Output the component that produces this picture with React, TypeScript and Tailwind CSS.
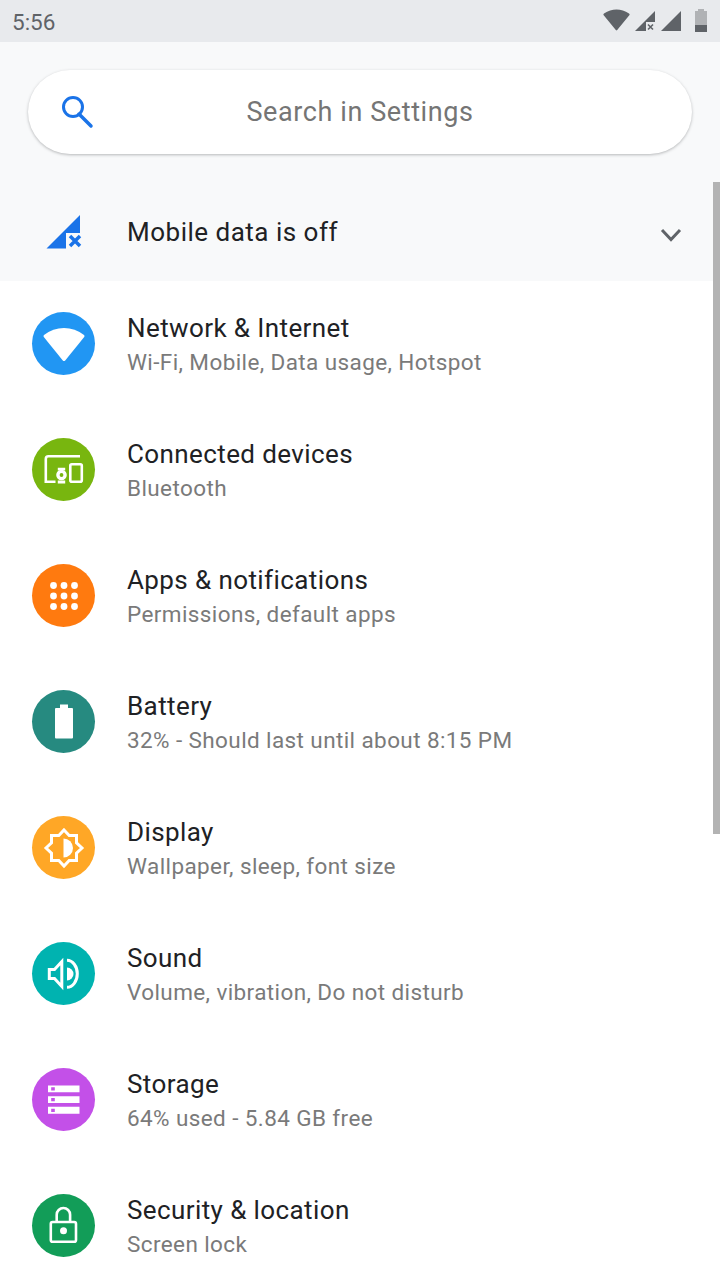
const items = [
  { title: "Network & Internet", sub: "Wi-Fi, Mobile, Data usage, Hotspot", bg: "bg-[#2196f3]", icon: <WifiIcon /> },
  { title: "Connected devices", sub: "Bluetooth", bg: "bg-[#78b60f]", icon: <DevicesIcon /> },
  { title: "Apps & notifications", sub: "Permissions, default apps", bg: "bg-[#ff7a0f]", icon: <AppsIcon /> },
  { title: "Battery", sub: "32% - Should last until about 8:15 PM", bg: "bg-[#268a80]", icon: <BatteryIcon /> },
  { title: "Display", sub: "Wallpaper, sleep, font size", bg: "bg-[#ffa726]", icon: <DisplayIcon /> },
  { title: "Sound", sub: "Volume, vibration, Do not disturb", bg: "bg-[#00b3b0]", icon: <SoundIcon /> },
  { title: "Storage", sub: "64% used - 5.84 GB free", bg: "bg-[#c350e8]", icon: <StorageIcon /> },
  { title: "Security & location", sub: "Screen lock", bg: "bg-[#129d58]", icon: <LockIcon /> },
];

function WifiIcon() {
  return (
    <svg width="42" height="42" viewBox="0 0 42 42" fill="#fff">
      <path d="M19.800 37.500 L0.800 14 Q0 13 1 12 Q10 5 21 5 Q32 5 41 12 Q42 13 41.200 14 L22.200 37.500 Q21 38.500 19.800 37.500 Z" />
    </svg>
  );
}

function DevicesIcon() {
  return (
    <svg width="42" height="42" viewBox="0 0 42 42" fill="none" stroke="#fff" strokeWidth="2.600">
      <path d="M37 7.300 H5.500 Q2.800 7.300 2.800 10 V32.700 H12.500" />
      <rect x="27.300" y="15.300" width="11.500" height="17.400" rx="1.500" />
      <circle cx="18.500" cy="26" r="3.600" strokeWidth="3.400" />
      <path d="M14.800 20.200 H22.200 M14.800 33 H22.200" strokeWidth="2.800" />
    </svg>
  );
}

function AppsIcon() {
  const centers = [10.5, 21, 31.5];
  return (
    <svg width="42" height="42" viewBox="0 0 42 42" fill="#fff">
      {centers.map((cy) =>
        centers.map((cx) => <circle key={`${cx}-${cy}`} cx={cx} cy={cy} r="3.400" />),
      )}
    </svg>
  );
}

function BatteryIcon() {
  return (
    <svg width="42" height="42" viewBox="0 0 42 42" fill="#fff">
      <path d="M17 3.500 H25 V7 H29 Q30 7 30 8 V36.500 Q30 37.500 29 37.500 H13 Q12 37.500 12 36.500 V8 Q12 7 13 7 H17 Z" />
    </svg>
  );
}

function DisplayIcon() {
  return (
    <svg width="42" height="42" viewBox="0 0 42 42">
      <path
        d="M21 3 L26.200 8.500 H33.500 V15.800 L39 21 L33.500 26.200 V33.500 H26.200 L21 39 L15.800 33.500 H8.500 V26.200 L3 21 L8.500 15.800 V8.500 H15.800 Z"
        fill="none"
        stroke="#fff"
        strokeWidth="3"
      />
      <path d="M20.500 11.500 A9.500 9.500 0 0 1 20.500 30.500 Z" fill="#fff" />
    </svg>
  );
}

function SoundIcon() {
  return (
    <svg width="42" height="42" viewBox="0 0 42 42" fill="none" stroke="#fff">
      <path d="M6.300 16.500 H11.500 L18.800 8.500 V33.500 L11.500 25.500 H6.300 Z" strokeWidth="3" />
      <path d="M24 14.500 A6.500 6.500 0 0 1 24 27.500 Z" fill="#fff" stroke="none" />
      <path d="M24 7.300 A10.300 13.500 0 0 1 24 34.300" strokeWidth="3" />
    </svg>
  );
}

function StorageIcon() {
  return (
    <svg width="42" height="42" viewBox="0 0 42 42">
      <path fill="#fff" d="M5 6.500 H36.500 V13.200 H5 Z M5 17.300 H36.500 V24 H5 Z M5 27.800 H36.500 V34.800 H5 Z" />
      <path fill="#c350e8" d="M8.200 8.200 H11.800 V11.500 H8.200 Z M8.200 19 H11.800 V22.300 H8.200 Z M8.200 29.700 H11.800 V33 H8.200 Z" />
    </svg>
  );
}

function LockIcon() {
  return (
    <svg width="42" height="42" viewBox="0 0 42 42" fill="none" stroke="#fff" strokeWidth="2.600">
      <path d="M13.700 17 V9.700 A6.700 6.700 0 0 1 27.100 9.700 V17" />
      <rect x="7.800" y="17" width="25.200" height="19.800" rx="1.800" />
      <circle cx="20.500" cy="25.700" r="3.500" fill="#fff" stroke="none" />
    </svg>
  );
}

function StatusBar() {
  return (
    <div className="flex h-[42px] items-center justify-between bg-[#e8eaed] pl-3 pr-[13px] text-[#5f6368]">
      <span className="pt-[3px] text-[22.5px] leading-none">5:56</span>
      <div className="flex items-start pb-[2px]">
        <svg width="27" height="22" viewBox="0 0 27 22" fill="#5f6368">
          <path d="M12.800 21 L0.500 6 Q0 5 1 4.500 Q7 0.500 13.500 0.500 Q20 0.500 26 4.500 Q27 5 26.500 6 L14.200 21 Q13.500 21.800 12.800 21 Z" />
        </svg>
        <div className="relative ml-[5px] mt-[2px]">
          <svg width="20" height="20" viewBox="0 0 20 20" fill="#5f6368">
            <path d="M20 0 V20 H0 Z" />
          </svg>
          <svg className="absolute bottom-0 right-0" width="9" height="9" viewBox="0 0 9 9">
            <rect width="9" height="9" fill="#e8eaed" />
            <path d="M2 2.500 L7 7.500 M7 2.500 L2 7.500" stroke="#5f6368" strokeWidth="1.600" />
          </svg>
        </div>
        <svg className="ml-[6px] mt-[2px]" width="20" height="20" viewBox="0 0 20 20" fill="#5f6368">
          <path d="M20 0 V20 H0 Z" />
        </svg>
        <div className="ml-[14px] flex w-[12px] flex-col items-center">
          <div className="h-[2px] w-[6px] bg-[#b0b2b5]" />
          <div className="flex h-[21px] w-[12px] flex-col justify-end bg-[#b0b2b5]">
            <div className="h-[7px] w-full bg-[#5f6368]" />
          </div>
        </div>
      </div>
    </div>
  );
}

function SearchBox() {
  return (
    <div className="px-7 pb-7 pt-7">
      <div className="relative flex h-[84px] items-center justify-center rounded-[42px] bg-white shadow-[0_1px_3px_rgba(60,64,67,0.35)]">
        <svg className="absolute left-[30px] top-[24px]" width="40" height="36" viewBox="0 0 40 36" fill="none" stroke="#1a73e8">
          <circle cx="15" cy="13" r="9.500" strokeWidth="3" />
          <path d="M21 20 L33 32" strokeWidth="3.500" strokeLinecap="round" />
        </svg>
        <span className="text-[27px] tracking-[0.6px] text-[#757575]">Search in Settings</span>
      </div>
    </div>
  );
}

function MobileDataRow() {
  return (
    <div className="flex h-[99px] items-center">
      <div className="ml-[46px] flex w-[81px] items-center pt-[1px]">
        <svg width="36" height="34" viewBox="0 0 36 34">
          <path d="M34 0 V33.500 H0.500 Z" fill="#1a73e8" />
          <rect x="20" y="18" width="16" height="16" fill="#f8f9fa" />
          <path d="M24 21 L34 31 M34 21 L24 31" stroke="#1a73e8" strokeWidth="3.500" />
        </svg>
      </div>
      <span className="pt-[2px] text-[26px] tracking-[0.5px] text-[#202124]">Mobile data is off</span>
      <svg className="ml-auto mr-[38px] mt-[6px]" width="22" height="14" viewBox="0 0 22 14" fill="none" stroke="#5f6368" strokeWidth="3">
        <path d="M2 2 L11 11.500 L20 2" />
      </svg>
    </div>
  );
}

export default function App() {
  return (
    <div className="relative h-[1280px] w-[720px] overflow-hidden bg-white font-['Roboto',sans-serif]">
      <StatusBar />
      <div className="bg-[#f8f9fa]">
        <SearchBox />
        <MobileDataRow />
      </div>
      <div>
        {items.map((item) => (
          <div key={item.title} className="flex h-[126px] items-start">
            <div className={`ml-8 mt-[31px] flex h-[63px] w-[63px] shrink-0 items-center justify-center rounded-full ${item.bg}`}>
              {item.icon}
            </div>
            <div className="ml-8 mt-[30px]">
              <p className="text-[26px] leading-[34px] tracking-[0.4px] text-[#202124]">{item.title}</p>
              <p className="text-[22.5px] leading-[34px] tracking-[0.4px] text-[#7a7a7a]">{item.sub}</p>
            </div>
          </div>
        ))}
      </div>
      <div className="absolute right-0 top-[182px] h-[652px] w-[7px] bg-[#b3b3b3]" />
    </div>
  );
}
